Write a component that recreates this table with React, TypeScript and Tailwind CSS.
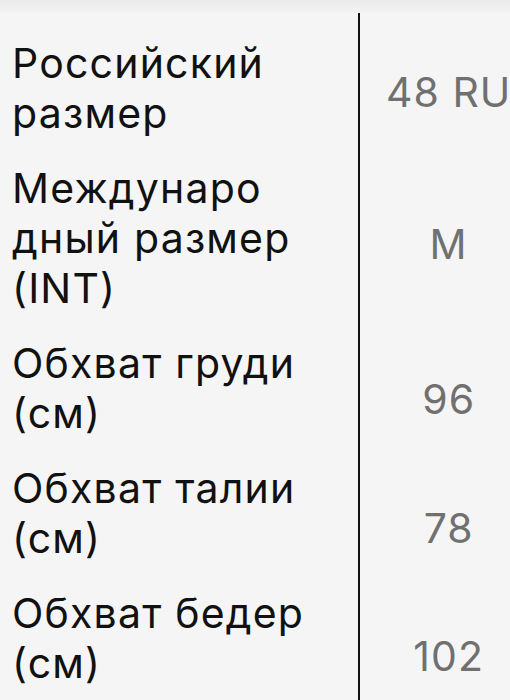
const rows = [
  { label: ["Российский", "размер"], value: "48 RU", pad: "pt-[54px]" },
  { label: ["Междунаро", "дный размер", "(INT)"], value: "M", pad: "pt-[81px]" },
  { label: ["Обхват груди", "(см)"], value: "96", pad: "pt-[61px]" },
  { label: ["Обхват талии", "(см)"], value: "78", pad: "pt-[65px]" },
  { label: ["Обхват бедер", "(см)"], value: "102", pad: "pt-[68px]" },
];

export default function App() {
  return (
    <div className="w-[510px] h-[700px] overflow-hidden bg-[#f5f5f5] font-['Inter',sans-serif]">
      <div className="h-[13px] bg-gradient-to-b from-[#ebebeb] to-[#f3f3f3]" />
      <div className="grid grid-cols-[358px_1fr]">
        {rows.map((r, i) => (
          <div key={i} className="contents">
            <div className="pl-3 pt-[25px] text-[41px] leading-[50px] tracking-[1.2px] text-[#111]">
              {r.label.map((l) => (
                <div key={l} className="whitespace-nowrap">{l}</div>
              ))}
            </div>
            <div className={`border-l-2 border-[#111] pl-[26px] ${r.pad} text-center text-[41px] leading-[50px] tracking-[1px] text-[#707070] whitespace-nowrap`}>
              {r.value}
            </div>
          </div>
        ))}
        <div className="h-[40px]" />
        <div className="h-[40px] border-l-2 border-[#111]" />
      </div>
    </div>
  );
}
